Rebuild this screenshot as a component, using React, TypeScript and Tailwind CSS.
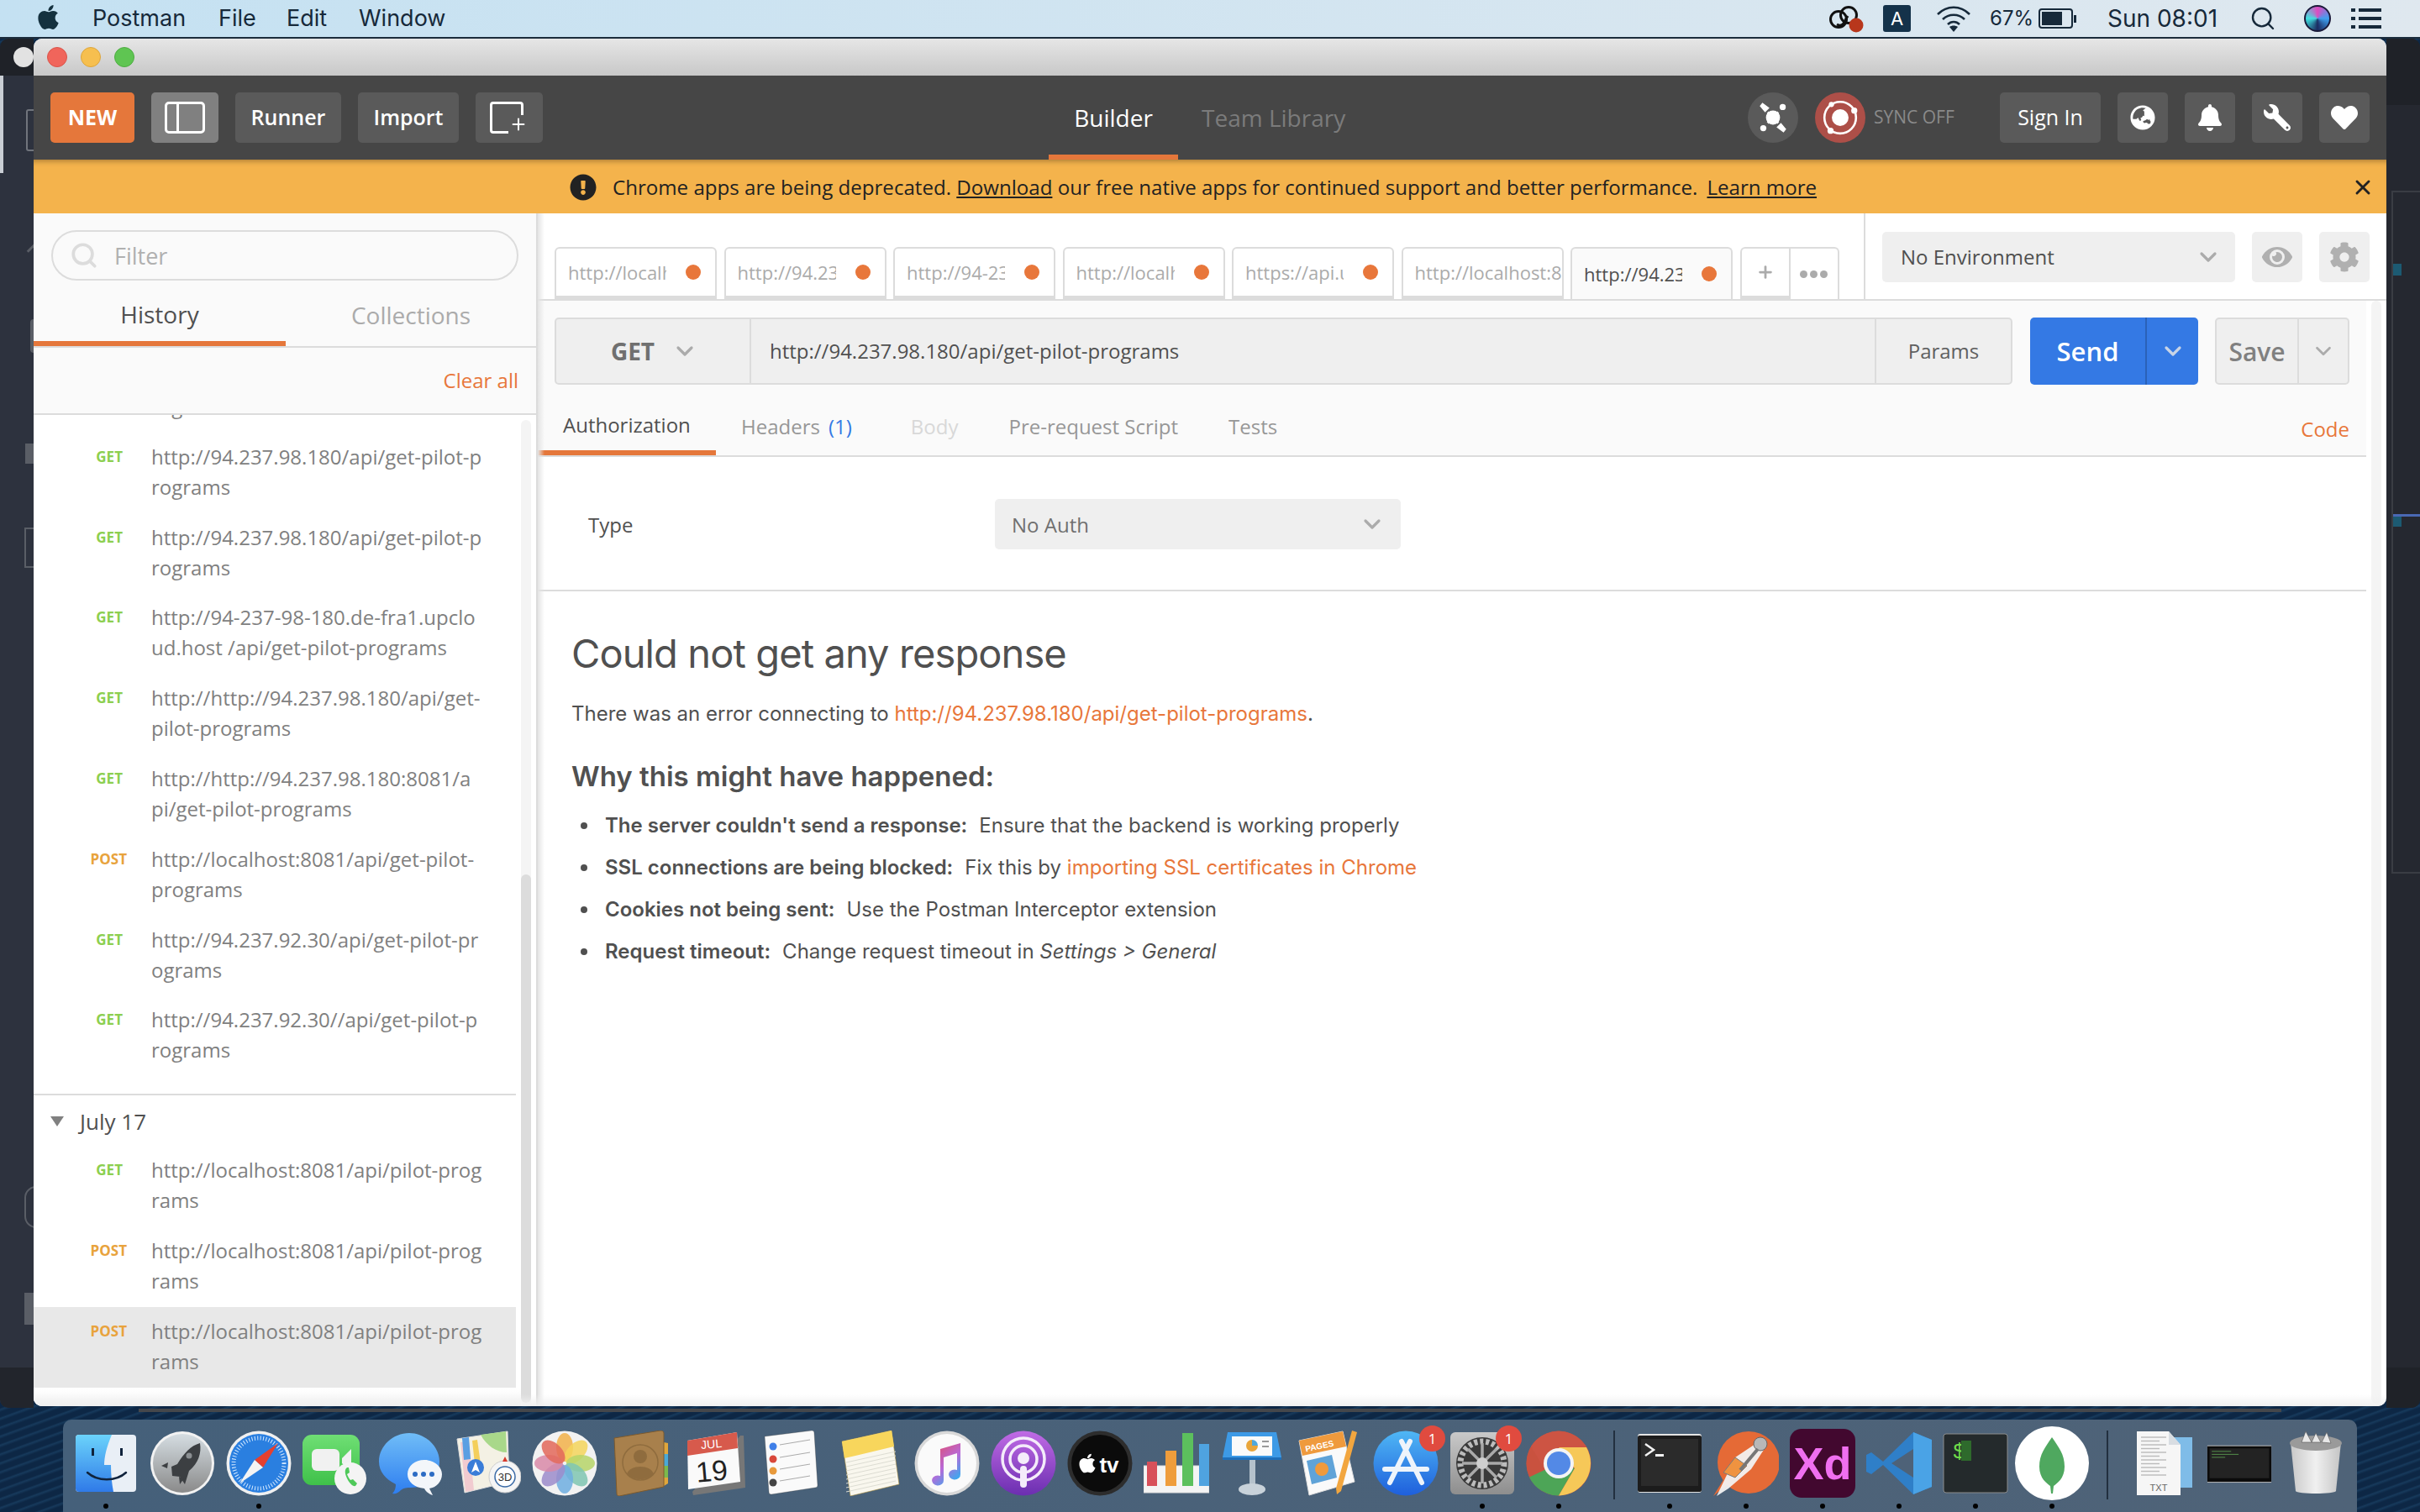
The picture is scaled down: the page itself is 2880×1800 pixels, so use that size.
import React from "react";
import { ChevronDown, Search, X, Plus } from "lucide-react";
import { FaApple, FaBell, FaExclamationCircle, FaGlobeAsia, FaHeart, FaWrench, FaCog, FaEye } from "react-icons/fa";

const openSans = "font-['Open_Sans',sans-serif]";

const historyTop = [
  { m: "GET", a: "http://94.237.98.180/api/get-pilot-p", b: "rograms" },
  { m: "GET", a: "http://94.237.98.180/api/get-pilot-p", b: "rograms" },
  { m: "GET", a: "http://94-237-98-180.de-fra1.upclo", b: "ud.host /api/get-pilot-programs" },
  { m: "GET", a: "http://http://94.237.98.180/api/get-", b: "pilot-programs" },
  { m: "GET", a: "http://http://94.237.98.180:8081/a", b: "pi/get-pilot-programs" },
  { m: "POST", a: "http://localhost:8081/api/get-pilot-", b: "programs" },
  { m: "GET", a: "http://94.237.92.30/api/get-pilot-pr", b: "ograms" },
  { m: "GET", a: "http://94.237.92.30//api/get-pilot-p", b: "rograms" },
];

const historyJuly = [
  { m: "GET", a: "http://localhost:8081/api/pilot-prog", b: "rams" },
  { m: "POST", a: "http://localhost:8081/api/pilot-prog", b: "rams" },
  { m: "POST", a: "http://localhost:8081/api/pilot-prog", b: "rams", selected: true },
];

const tabs = ["http://localhost", "http://94.237", "http://94-237", "http://localhost", "https://api.upcloud", "http://localhost:8081", "http://94.237"];

function HistoryRow({ m, a, b, selected }: { m: string; a: string; b: string; selected?: boolean }) {
  return (
    <div className={`flex h-[95.8px] w-[574px] pt-[11px] ${selected ? "bg-[#e8e8e8]" : ""}`}>
      <div className={`w-[140px] text-right h-[36px] leading-[36px] text-[17px] font-bold ${m === "GET" ? "text-[#8ccf4f] pr-[34px]" : "text-[#e8a33d] pr-[29px]"}`}>{m}</div>
      <div className="text-[24px] leading-[36px] text-[#808080] whitespace-nowrap">
        <div>{a}</div>
        <div>{b}</div>
      </div>
    </div>
  );
}

function ToolBtn({ w, active, children }: { w: string; active?: boolean; children: React.ReactNode }) {
  return (
    <div className={`${w} h-[60px] rounded-[5px] flex items-center justify-center text-white text-[25px] font-semibold ${active ? "bg-[#808080]" : "bg-[#5a5a5a]"}`}>
      {children}
    </div>
  );
}

function Tab({ label, active, wide }: { label: string; active?: boolean; wide?: boolean }) {
  return (
    <div className={`w-[193px] h-[62px] shrink-0 rounded-t-[6px] border-2 border-[#dcdcdc] flex items-center pl-[14px] ${active ? "bg-[#fafafa] border-b-0" : "bg-white border-b-4"}`}>
      <div className={`overflow-hidden whitespace-nowrap text-[22px] ${wide ? "w-[175px]" : "w-[117px]"} ${active ? "text-[#505050]" : "text-[#ababab]"}`}>{label}</div>
      {!wide && <div className="ml-[23px] w-[18px] h-[18px] rounded-full bg-[#e8773b]" />}
    </div>
  );
}

const Finder = () => (
  <svg viewBox="0 0 78 78" className="w-full h-full">
    <defs>
      <linearGradient id="fi" x1="0" y1="0" x2="0" y2="1"><stop offset="0" stopColor="#6bd3fb" /><stop offset="1" stopColor="#2f7ae8" /></linearGradient>
    </defs>
    <rect x="3" y="5" width="72" height="68" rx="4" fill="#e9eff6" />
    <path d="M7 5h39c-6 14-9 26-9 36h8c0 11 1 22 3 32H7a4 4 0 0 1-4-4V9a4 4 0 0 1 4-4z" fill="url(#fi)" />
    <rect x="22" y="21" width="3" height="9" fill="#10233c" /><rect x="56" y="21" width="3" height="9" fill="#10233c" />
    <path d="M17 50c12 11 34 11 46 0" fill="none" stroke="#10233c" strokeWidth="2.5" strokeLinecap="round" />
  </svg>
);
const Launchpad = () => (
  <svg viewBox="0 0 78 78" className="w-full h-full">
    <defs><linearGradient id="lp" x1="0" y1="0" x2="0" y2="1"><stop offset="0" stopColor="#d5dde2" /><stop offset="1" stopColor="#8a8a8a" /></linearGradient></defs>
    <circle cx="39" cy="39" r="38" fill="#f2f2f2" /><circle cx="39" cy="39" r="35" fill="url(#lp)" />
    <path d="M60 15c2 12-2 24-13 33l-5 16-6-9-9-1-1-11 7-3c8-13 16-22 27-25z" fill="#3c3f42" />
    <path d="M22 38l-8 4 7 3zM36 64l-1-9 6 2z" fill="#3c3f42" /><circle cx="47" cy="30" r="3.5" fill="#8b8f92" />
  </svg>
);
const Safari = () => (
  <svg viewBox="0 0 78 78" className="w-full h-full">
    <circle cx="39" cy="39" r="38.5" fill="#f0f0f0" /><circle cx="39" cy="39" r="35" fill="#2a7fe0" />
    <circle cx="39" cy="39" r="30" fill="none" stroke="#d6eaff" strokeWidth="5" strokeDasharray="1 2.4" />
    <path d="M62 15L34 35l10 9z" fill="#e5402f" /><path d="M16 63l28-19-10-9z" fill="#f4f4f4" />
  </svg>
);
const FaceTime = () => (
  <svg viewBox="0 0 78 78" className="w-full h-full">
    <defs><linearGradient id="ft" x1="0" y1="0" x2="0" y2="1"><stop offset="0" stopColor="#6fdf74" /><stop offset="1" stopColor="#3fc14a" /></linearGradient></defs>
    <rect x="0" y="5" width="68" height="60" rx="11" fill="url(#ft)" />
    <rect x="11" y="22" width="33" height="26" rx="6" fill="#f1f1f1" /><path d="M47 33l11-11v27L47 39z" fill="#f1f1f1" />
    <circle cx="57" cy="57" r="19" fill="#f4f4f4" />
    <path d="M53 44c-3 2-3 7 0 13s7 10 10 9l2-3-5-5-3 1c-2-2-3-5-4-7l3-2-1-6z" fill="#4fc95a" />
  </svg>
);
const Messages = () => (
  <svg viewBox="0 0 78 78" className="w-full h-full">
    <defs><linearGradient id="ms" x1="0" y1="0" x2="0" y2="1"><stop offset="0" stopColor="#70bdf7" /><stop offset="1" stopColor="#2e7ef0" /></linearGradient></defs>
    <path d="M36 3c19 0 36 16 36 34 0 19-15 31-34 31-5 0-8 0-12 3-3 3-6 5-10 4 3-3 4-7 4-11C8 58 0 49 0 37 0 18 17 3 36 3z" fill="url(#ms)" />
    <path d="M54 35c12 0 21 8 21 17s-7 16-15 17l4 8c-4-1-8-4-10-8-12-1-20-8-20-17 0-10 9-17 20-17z" fill="#f3f6fa" />
    <circle cx="43" cy="52" r="3" fill="#2d6cc4" /><circle cx="53" cy="52" r="3" fill="#2d6cc4" /><circle cx="63" cy="52" r="3" fill="#2d6cc4" />
  </svg>
);
const Maps = () => (
  <svg viewBox="0 0 78 78" className="w-full h-full">
    <path d="M2 10L62 1l2 60-53 13z" fill="#f4f1e4" stroke="#ddd" />
    <path d="M30 5l30-4 1 25c-12 0-24-8-31-21z" fill="#a9d88a" />
    <path d="M6 14l10-1 6 58-10 2z" fill="#f1cbd0" /><path d="M20 12l6-1 5 36-7 2z" fill="#f4cf5b" />
    <path d="M8 9l8-1 2 26-8 1z" fill="#5b9fe2" />
    <circle cx="24" cy="44" r="10" fill="#3a7dd8" /><path d="M24 37l5 13-5-3-5 3z" fill="#fff" />
    <circle cx="59" cy="55" r="19" fill="#f5f5f5" stroke="#ccc" /><circle cx="59" cy="55" r="12" fill="#fff" stroke="#3a6aa6" strokeWidth="1.5" />
    <path d="M59 31l3 6h-6z" fill="#d73a2c" />
    <text x="59" y="60" textAnchor="middle" fontSize="13" fontFamily="Liberation Sans, sans-serif" fill="#333">3D</text>
  </svg>
);
const Photos = () => {
  const cols = ["#f2b14a", "#f5d55c", "#b6d568", "#7fc6b2", "#6faee0", "#9c8ccb", "#d98aa8", "#e3685b"];
  return (
    <svg viewBox="0 0 78 78" className="w-full h-full">
      <circle cx="39" cy="39" r="38.5" fill="#f2f2f2" />
      {cols.map((c, i) => (
        <ellipse key={i} cx="39" cy="20" rx="10" ry="17" fill={c} fillOpacity="0.85" transform={`rotate(${i * 45} 39 39)`} />
      ))}
    </svg>
  );
};
const Contacts = () => (
  <svg viewBox="0 0 78 78" className="w-full h-full">
    <path d="M66 14l5 1v48l-5 3z" fill="#e0a63c" /><rect x="66" y="28" width="5" height="14" fill="#4aa9d8" /><rect x="66" y="42" width="5" height="14" fill="#7cb94d" />
    <path d="M7 9L62 0c2 0 4 1 4 3v64L13 78c-2 0-3-1-3-3z" fill="#a8804c" stroke="#7c5a2e" />
    <circle cx="38" cy="38" r="21" fill="none" stroke="#8f6c3e" strokeWidth="1.5" />
    <circle cx="38" cy="31" r="8" fill="#8f6c3e" /><path d="M22 52c3-12 29-12 32 0-8 8-24 8-32 0z" fill="#8f6c3e" />
  </svg>
);
const Calendar = () => (
  <svg viewBox="0 0 78 78" className="w-full h-full">
    <path d="M66 6l4 0 2 62-62 9-1-4z" fill="#777" />
    <path d="M3 12L62 2l4 59-62 9z" fill="#fafafa" />
    <path d="M3 12L62 2l1 19-60 9z" fill="#d75a4c" />
    <text x="32" y="21" textAnchor="middle" fontSize="14" fill="#fff" fontFamily="Liberation Sans, sans-serif" transform="rotate(-5 32 21)">JUL</text>
    <text x="33" y="60" textAnchor="middle" fontSize="34" fill="#222" fontFamily="Liberation Sans, sans-serif" transform="rotate(-5 33 60)">19</text>
  </svg>
);
const Reminders = () => (
  <svg viewBox="0 0 78 78" className="w-full h-full">
    <path d="M4 7L60 0c2 0 3 1 3 3l4 62c0 2-1 3-3 3L12 76c-2 0-3-1-3-3z" fill="#fafafa" stroke="#333" strokeOpacity=".3" />
    {[["#3f7fe8", 19], ["#d9483b", 34], ["#e89a3c", 48], ["#444", 62]].map(([c, y], i) => (
      <g key={i}>
        <circle cx="14" cy={y as number} r="4.5" fill={c as string} />
        <path d={`M22 ${(y as number) - 2}L58 ${(y as number) - 8}`} stroke="#aaa" />
      </g>
    ))}
  </svg>
);
const Notes = () => (
  <svg viewBox="0 0 78 78" className="w-full h-full">
    <path d="M5 13L64 0l9 64-58 14z" fill="#f9f7ee" stroke="#a68a3a" strokeOpacity=".6" />
    <path d="M5 13L64 0l3 19-59 14z" fill="#f8d65c" />
    {[0, 1, 2, 3, 4, 5, 6, 7].map((i) => (
      <path key={i} d={`M10 ${38 + i * 5}L69 ${25 + i * 5}`} stroke="#dcdcd2" />
    ))}
  </svg>
);
const Music = () => (
  <svg viewBox="0 0 78 78" className="w-full h-full">
    <defs><linearGradient id="mu" x1="0" y1="0" x2="0.6" y2="1"><stop offset="0" stopColor="#e6495f" /><stop offset="0.6" stopColor="#b86ad8" /><stop offset="1" stopColor="#3fa7ee" /></linearGradient></defs>
    <circle cx="39" cy="39" r="38.5" fill="#d8d8d8" /><circle cx="39" cy="39" r="35" fill="#fafafa" />
    <path d="M31 22l24-7v37a7 6 0 1 1-4-5V27l-16 5v27a7 6 0 1 1-4-5z" fill="url(#mu)" />
  </svg>
);
const Podcasts = () => (
  <svg viewBox="0 0 78 78" className="w-full h-full">
    <defs><linearGradient id="po" x1="0" y1="0" x2="0" y2="1"><stop offset="0" stopColor="#c06be5" /><stop offset="1" stopColor="#6b2eb0" /></linearGradient></defs>
    <circle cx="39" cy="39" r="38.5" fill="url(#po)" />
    <circle cx="39" cy="34" r="25" fill="none" stroke="#f4ecfa" strokeWidth="3.5" /><circle cx="39" cy="34" r="16" fill="none" stroke="#f4ecfa" strokeWidth="3.5" />
    <circle cx="39" cy="33" r="7" fill="#f4ecfa" /><rect x="35" y="42" width="8" height="26" rx="4" fill="#f4ecfa" />
  </svg>
);
const AppleTv = () => (
  <svg viewBox="0 0 78 78" className="w-full h-full">
    <circle cx="39" cy="39" r="38.5" fill="#2d2d2d" /><circle cx="39" cy="39" r="34" fill="#0b0b0b" />
    <foreignObject x="11" y="26" width="26" height="26"><FaApple color="#fff" size={26} /></foreignObject>
    <text x="50" y="50" textAnchor="middle" fontSize="26" fontWeight="700" fill="#fff" fontFamily="Liberation Sans, sans-serif">tv</text>
  </svg>
);
const Numbers = () => (
  <svg viewBox="0 0 78 78" className="w-full h-full">
    <rect x="0" y="42" width="78" height="32" fill="#f4f4f4" stroke="#ddd" />
    <rect x="4" y="37" width="12" height="29" fill="#d8505a" /><rect x="26" y="24" width="13" height="42" fill="#ef9d3c" />
    <rect x="46" y="3" width="13" height="63" fill="#5cc05d" /><rect x="66" y="16" width="12" height="50" fill="#4fa3e0" />
  </svg>
);
const Keynote = () => (
  <svg viewBox="0 0 78 78" className="w-full h-full">
    <rect x="35" y="30" width="7" height="40" fill="#b5c2cc" /><ellipse cx="38" cy="70" rx="16" ry="7" fill="#c8d2da" />
    <path d="M9 2h58l6 30H3z" fill="#3d9ae6" /><path d="M3 32h70v3H3z" fill="#1f6fba" />
    <rect x="14" y="7" width="48" height="23" fill="#fafafa" />
    <path d="M38 11a7 7 0 1 0 7 7h-7z" fill="#e9a53a" /><path d="M38 11a7 7 0 0 1 7 7h-7z" fill="#4fa8dc" />
    <rect x="50" y="12" width="8" height="2" fill="#999" /><rect x="50" y="18" width="8" height="2" fill="#999" />
  </svg>
);
const Pages = () => (
  <svg viewBox="0 0 78 78" className="w-full h-full">
    <path d="M3 12L55 1l14 60-54 16z" fill="#fafafa" stroke="#ddd" />
    <path d="M3 12L55 1l4 18-52 11z" fill="#ef9a3d" />
    <text x="28" y="22" textAnchor="middle" fontSize="10" fontWeight="700" fill="#fff" fontFamily="Liberation Sans, sans-serif" transform="rotate(-12 28 22)">PAGES</text>
    <path d="M12 36l30-7 6 27-30 8z" fill="#5fa3d8" /><circle cx="30" cy="46" r="8" fill="#ef9a3d" />
    <path d="M66 0l6 2-19 70-5 4-1-7z" fill="#f2a63f" />
  </svg>
);
const AppStore = () => (
  <svg viewBox="0 0 78 78" className="w-full h-full">
    <defs><linearGradient id="as" x1="0" y1="0" x2="0" y2="1"><stop offset="0" stopColor="#4fb7f5" /><stop offset="1" stopColor="#1e5fdc" /></linearGradient></defs>
    <circle cx="39" cy="39" r="38.5" fill="url(#as)" />
    <path d="M34 13l24 49M44 13L20 62" stroke="#eef4fb" strokeWidth="6" strokeLinecap="round" /><path d="M14 46h50" stroke="#eef4fb" strokeWidth="6" strokeLinecap="round" />
  </svg>
);
const Settings = () => (
  <svg viewBox="0 0 78 78" className="w-full h-full">
    <defs><linearGradient id="se" x1="0" y1="0" x2="0" y2="1"><stop offset="0" stopColor="#c9c9c9" /><stop offset="1" stopColor="#8e8e8e" /></linearGradient></defs>
    <rect x="1" y="2" width="76" height="74" rx="6" fill="url(#se)" />
    <circle cx="39" cy="39" r="31" fill="#3a3a3a" />
    <circle cx="39" cy="39" r="26" fill="none" stroke="#bcbcbc" strokeWidth="7" strokeDasharray="4 3" />
    <path d="M39 15v48M15 39h48M22 22l34 34M56 22L22 56" stroke="#a9a9a9" strokeWidth="3.5" /><circle cx="39" cy="39" r="7" fill="#cfcfcf" />
  </svg>
);
const Chrome = () => (
  <svg viewBox="0 0 78 78" className="w-full h-full">
    <circle cx="39" cy="39" r="38.5" fill="#c9523f" />
    <path d="M39 39L5.7 58.2A38.5 38.5 0 0 1 5.7 19.8z" fill="#c9523f" />
    <path d="M4 55.5A38.5 38.5 0 0 0 39 77.5L58 45 39 39z" fill="#4da557" />
    <path d="M39 77.5A38.5 38.5 0 0 0 72 20H39l19 25z" fill="#f6c858" />
    <path d="M72 20A38.5 38.5 0 0 0 6 19l16 27 17-26z" fill="#cd5443" />
    <circle cx="39" cy="39" r="18" fill="#f4f4f4" /><circle cx="39" cy="39" r="14" fill="#5389e6" />
  </svg>
);
const Terminal = () => (
  <svg viewBox="0 0 78 78" className="w-full h-full">
    <rect x="1" y="4" width="76" height="70" rx="3" fill="#e4e4e4" /><rect x="1" y="6" width="76" height="67" rx="2" fill="#1c1c1c" /><rect x="5" y="10" width="68" height="56" fill="#2b2b2b" />
    <path d="M10 16l10 7-10 7" fill="none" stroke="#f2f2f2" strokeWidth="2.5" /><rect x="22" y="28" width="10" height="3" fill="#f2f2f2" />
  </svg>
);
const PostmanIcon = () => (
  <svg viewBox="0 0 78 78" className="w-full h-full">
    <circle cx="42" cy="38" r="37" fill="#e56a36" />
    <path d="M0 78l13-21 8 4z" fill="#e56a36" />
    <path d="M4 78l22-46 24-16 10 7-15 23-27 23z" fill="#f2f2f2" opacity=".95" />
    <path d="M12 50l14-18 14 10-14 14z" fill="#ef9340" stroke="#7a7a7a" />
    <circle cx="56" cy="16" r="8" fill="#b8b8b8" stroke="#666" />
    <path d="M53 22L32 47" stroke="#777" strokeWidth="4" />
  </svg>
);
const Xd = () => (
  <div className="w-full h-[82px] -mt-[2px] rounded-[14px] bg-[#42082f] flex items-center justify-center text-[#f06ff0] text-[54px] leading-none font-semibold font-['Liberation_Sans',sans-serif]">Xd</div>
);
const VsCode = () => (
  <svg viewBox="0 0 78 78" className="w-full h-full">
    <path d="M56 2L20 37 6 26 0 29v20l6 3 14-11 36 35 22-9V11z" fill="#2f7fc8" />
    <path d="M56 2l22 9v56l-22 9z" fill="#4aa3e6" /><path d="M56 22L30 39l26 17z" fill="#4e6278" />
  </svg>
);
const ITerm = () => (
  <svg viewBox="0 0 78 78" className="w-full h-full">
    <rect x="1" y="4" width="76" height="70" rx="3" fill="#242a2c" stroke="#8c8c8c" />
    <text x="12" y="33" fontSize="26" fill="#6fdc4a" fontFamily="Liberation Mono, monospace">$</text><rect x="22" y="12" width="12" height="24" fill="#2e6a2c" />
  </svg>
);
const Mongo = () => (
  <svg viewBox="0 0 78 78" className="w-full h-full overflow-visible">
    <circle cx="39" cy="39" r="44" fill="#fff" />
    <path d="M39 8c8 12 15 20 15 35 0 14-9 20-13 23l-1 9h-2l-1-9c-4-3-13-9-13-23 0-15 7-23 15-35z" fill="#4fa85f" />
  </svg>
);
const TxtFile = () => (
  <svg viewBox="0 0 78 78" className="w-full h-full">
    <rect x="44" y="8" width="30" height="60" fill="#7fbce8" />
    <path d="M8 1h38l14 16v60H8z" fill="#f6f6f6" />
    <path d="M46 1l14 16H46z" fill="#d8dde2" />
    {[0, 1, 2, 3, 4, 5, 6, 7, 8, 9, 10].map((i) => (
      <path key={i} d={`M13 ${8 + i * 4.5}h${i % 2 ? 22 : 30}`} stroke="#bbb" strokeWidth="1.4" />
    ))}
    <text x="34" y="72" textAnchor="middle" fontSize="11" fill="#666" fontFamily="Liberation Sans, sans-serif">TXT</text>
  </svg>
);
const MiniTerminal = () => (
  <svg viewBox="0 0 88 78" className="w-full h-full">
    <rect x="1" y="15" width="86" height="50" fill="#cfcfcf" /><rect x="1" y="16" width="86" height="48" fill="#0b0b0b" /><rect x="4" y="19" width="80" height="40" fill="#232323" />
    <path d="M7 23h26M7 27h36M7 31h18" stroke="#5c9c50" />
  </svg>
);
const Trash = () => (
  <svg viewBox="0 0 78 78" className="w-full h-full">
    <defs><linearGradient id="tr" x1="0" y1="0" x2="1" y2="0"><stop offset="0" stopColor="#c8c8c8" /><stop offset="0.5" stopColor="#f0f0f0" /><stop offset="1" stopColor="#c4c4c4" /></linearGradient></defs>
    <path d="M9 14h60l-6 58c-1 4-47 4-48 0z" fill="url(#tr)" /><ellipse cx="39" cy="15" rx="31" ry="9" fill="#9a9a9a" />
    <path d="M22 14l5-13 7 13zM34 14l5-11 6 11zM46 14l6-12 5 13z" fill="#e8e8e8" stroke="#555" strokeWidth=".6" />
  </svg>
);

const dockLeft: { C: React.FC; dot?: boolean; badge?: boolean }[] = [
  { C: Finder, dot: true }, { C: Launchpad }, { C: Safari, dot: true }, { C: FaceTime }, { C: Messages }, { C: Maps }, { C: Photos },
  { C: Contacts }, { C: Calendar }, { C: Reminders }, { C: Notes }, { C: Music }, { C: Podcasts }, { C: AppleTv }, { C: Numbers },
  { C: Keynote }, { C: Pages }, { C: AppStore, badge: true }, { C: Settings, badge: true, dot: true }, { C: Chrome, dot: true },
];
const dockMid: { C: React.FC; dot?: boolean }[] = [
  { C: Terminal, dot: true }, { C: PostmanIcon, dot: true }, { C: Xd, dot: true }, { C: VsCode, dot: true }, { C: ITerm, dot: true }, { C: Mongo, dot: true },
];
const dockRight: { C: React.FC }[] = [{ C: TxtFile }, { C: MiniTerminal }, { C: Trash }];

function DockItem({ C, dot, badge }: { C: React.FC; dot?: boolean; badge?: boolean }) {
  return (
    <div className="relative w-[78px] shrink-0 flex flex-col items-center">
      <div className="w-[78px] h-[78px]"><C /></div>
      {badge && (
        <div className="absolute -top-[6px] -right-[8px] w-[31px] h-[31px] rounded-full bg-[#e04b3f] text-white text-[17px] flex items-center justify-center">1</div>
      )}
      {dot && <div className="absolute top-[87px] w-[6px] h-[6px] rounded-full bg-black" />}
    </div>
  );
}

function MenuIcons() {
  return (
    <div className="ml-auto flex items-center text-[#16293a] h-full">
      <svg viewBox="0 0 42 34" className="w-[42px] h-[34px]">
        <circle cx="24" cy="13" r="9.5" fill="none" stroke="#111" strokeWidth="3" />
        <circle cx="12" cy="18" r="9.5" fill="none" stroke="#111" strokeWidth="3" />
        <path d="M10 24c5 3 8 0 10-5l3-5" fill="none" stroke="#111" strokeWidth="3" />
        <circle cx="33" cy="25" r="8.5" fill="#b8371c" />
      </svg>
      <div className="ml-[23px] w-[33px] h-[32px] rounded-[3px] bg-[#14324a] text-white text-[22px] flex items-center justify-center">A</div>
      <svg viewBox="0 0 42 32" className="ml-[30px] w-[42px] h-[32px]" fill="none" stroke="#16293a" strokeWidth="2.6">
        <path d="M2 11c11-11 27-11 38 0" /><path d="M8 17c7-7 19-7 26 0" /><path d="M14 23c4-4 10-4 14 0" />
        <path d="M21 32l-5-6c3-2 7-2 10 0z" fill="#16293a" stroke="none" />
      </svg>
      <div className="ml-[22px] text-[24px] w-[48px] whitespace-nowrap">67%</div>
      <div className="ml-[10px] w-[41px] h-[24px] rounded-[4px] border-2 border-[#16293a] p-[2px] flex">
        <div className="w-[24px] bg-[#16293a]" />
      </div>
      <div className="w-[3px] h-[9px] bg-[#16293a] ml-[1px]" />
      <div className="ml-[37px] text-[28px] w-[129px] whitespace-nowrap">Sun 08:01</div>
      <Search className="ml-[40px]" size={32} strokeWidth={1.8} color="#16293a" />
      <div className="ml-[33px] w-[32px] h-[32px] rounded-full border-2 border-[#1a1a3a] bg-[conic-gradient(#e04ac0,#3fa0f0,#1a2a60,#40e0e0,#e04ac0)]" />
      <div className="ml-[24px] w-[36px] flex flex-col gap-[6px]">
        {[0, 1, 2].map((i) => (
          <div key={i} className="flex gap-[4px]">
            <div className="w-[5px] h-[4px] bg-[#16293a]" />
            <div className="flex-1 h-[4px] bg-[#16293a]" />
          </div>
        ))}
      </div>
    </div>
  );
}

export default function App() {
  return (
    <div className={`w-[2880px] h-[1800px] overflow-hidden flex flex-col bg-[repeating-linear-gradient(160deg,#0d2745_0px,#0d2745_5px,#173a5c_7px,#0d2745_10px)] ${openSans}`}>
      <div className="h-[46px] shrink-0 border-b-2 border-[#1b2c3c] bg-gradient-to-r from-[#c4e1f2] to-[#dfe8ef] flex items-center pl-[41px] pr-[46px] font-['Inter',sans-serif] text-[#16293a] text-[27px]">
        <FaApple size={33} color="#14313f" className="-mt-[4px]" />
        <div className="ml-[36px] w-[150px]">Postman</div>
        <div className="w-[81px]">File</div>
        <div className="w-[86px]">Edit</div>
        <div>Window</div>
        <MenuIcons />
      </div>

      <div className="h-[1630px] shrink-0 flex relative">
        {/* back window */}
        <div className="w-[40px] shrink-0 bg-[#2d323e] rounded-l-[10px] flex flex-col overflow-hidden">
          <div className="h-[44px] bg-[#1f2228] relative">
            <div className="absolute left-[16px] top-[10px] w-[24px] h-[24px] rounded-full bg-[#e2e2e2]" />
          </div>
          <div className="w-[4px] h-[116px] bg-[#c9ced4]" />
          <div className="flex-1 relative">
            <div className="absolute left-[31px] top-[-76px] w-[16px] h-[50px] border-2 border-[#70747c] rounded-[3px]" />
            <div className="absolute left-[31px] top-[88px] w-[12px] h-[3px] bg-[#5a5e66] -rotate-45" />
            <div className="absolute left-[36px] top-[174px] w-[8px] h-[40px] rounded-full bg-[#5a5e66]" />
            <div className="absolute left-[30px] top-[322px] w-[12px] h-[24px] bg-[#5a5e66]" />
            <div className="absolute left-[29px] top-[422px] w-[16px] h-[48px] border-2 border-[#5a5e66]" />
            <div className="absolute left-[29px] top-[1206px] w-[28px] h-[50px] border-2 border-[#5a5e66] rounded-full" />
            <div className="absolute left-[29px] top-[1333px] w-[12px] h-[38px] bg-[#5a5e66]" />
          </div>
          <div className="h-[48px] bg-[#22252c]" />
        </div>

        {/* postman window */}
        <div className="w-[2800px] h-[1628px] shrink-0 flex flex-col rounded-[10px] overflow-hidden relative bg-white">
          <div className="h-[44px] shrink-0 bg-gradient-to-b from-[#e6e6e6] to-[#c8c8c8] flex items-center pl-[16px] gap-[16px]">
            <div className="w-[24px] h-[24px] rounded-full bg-[#f0655b] border border-[#d9544a]" />
            <div className="w-[24px] h-[24px] rounded-full bg-[#f6bf4f] border border-[#dca53c]" />
            <div className="w-[24px] h-[24px] rounded-full bg-[#5fc552] border border-[#4dac42]" />
          </div>

          <div className="h-[100px] shrink-0 bg-[#464646] flex items-center pl-[20px] pr-[20px]">
            <div className="w-[100px] h-[60px] rounded-[5px] bg-[#e5773b] flex items-center justify-center text-white text-[25px] font-bold">NEW</div>
            <div className="ml-[20px]">
              <ToolBtn w="w-[80px]" active>
                <div className="w-[48px] h-[38px] rounded-[5px] border-[3px] border-white flex">
                  <div className="w-[14px] border-r-[3px] border-white" />
                </div>
              </ToolBtn>
            </div>
            <div className="ml-[20px]"><ToolBtn w="w-[126px]">Runner</ToolBtn></div>
            <div className="ml-[20px]"><ToolBtn w="w-[120px]">Import</ToolBtn></div>
            <div className="ml-[20px]">
              <ToolBtn w="w-[80px]">
                <div className="relative w-[46px] h-[38px]">
                  <div className="w-[40px] h-[38px] rounded-[4px] border-[3px] border-white" />
                  <div className="absolute right-0 bottom-0 w-[24px] h-[22px] bg-[#5a5a5a] flex items-center justify-center">
                    <Plus size={22} color="#fff" strokeWidth={2.2} />
                  </div>
                </div>
              </ToolBtn>
            </div>
            <div className="ml-[602px] w-[154px] h-[100px] border-b-[6px] border-[#e5773b] flex items-center justify-center text-white text-[28px] pt-[6px]">Builder</div>
            <div className="ml-[28px] text-[#7b7b7b] text-[28px] whitespace-nowrap">Team Library</div>
            <div className="ml-auto flex items-center">
              <div className="w-[60px] h-[60px] rounded-full bg-[#5a5a5a] flex items-center justify-center">
                <svg viewBox="0 0 40 40" className="w-[42px] h-[42px]" fill="#fff">
                  <circle cx="20" cy="20" r="8" /><path d="M8 3l8 6-5 5-6-7zM32 37l-8-6 5-5 6 7z" /><circle cx="31" cy="8" r="3.5" /><circle cx="9" cy="32" r="3.5" />
                  <path d="M14 14l12 12M26 14L14 26" stroke="#fff" strokeWidth="3" />
                </svg>
              </div>
              <div className="ml-[20px] w-[60px] h-[60px] rounded-full bg-[#ad4f48] flex items-center justify-center">
                <svg viewBox="0 0 44 44" className="w-[46px] h-[46px]" fill="none" stroke="#fff" strokeWidth="2.5">
                  <circle cx="22" cy="22" r="18" /><circle cx="22" cy="22" r="9.5" fill="#fff" stroke="none" />
                  <circle cx="38" cy="14" r="3.5" fill="#fff" stroke="none" /><circle cx="12" cy="7" r="3" fill="#fff" stroke="none" /><circle cx="11" cy="37" r="3.5" fill="#fff" stroke="none" />
                </svg>
              </div>
              <div className="ml-[10px] w-[150px] text-[21px] text-[#8a8a8a] whitespace-nowrap">SYNC OFF</div>
              <ToolBtn w="w-[120px]"><span className="font-normal text-[25px]">Sign In</span></ToolBtn>
              <div className="ml-[20px]"><ToolBtn w="w-[60px]"><FaGlobeAsia size={30} /></ToolBtn></div>
              <div className="ml-[20px]"><ToolBtn w="w-[60px]"><FaBell size={32} /></ToolBtn></div>
              <div className="ml-[20px]"><ToolBtn w="w-[60px]"><FaWrench size={32} className="-scale-x-100" /></ToolBtn></div>
              <div className="ml-[20px]"><ToolBtn w="w-[60px]"><FaHeart size={32} /></ToolBtn></div>
            </div>
          </div>

          <div className="h-[64px] shrink-0 bg-[#f4b34c] shadow-[inset_0_6px_6px_-4px_rgba(0,0,0,0.3)] flex items-center pl-[638px] pr-[14px] pt-[2px] text-[#222] text-[24.1px] whitespace-nowrap">
            <FaExclamationCircle size={32} color="#222" />
            <div className="ml-[19px]">
              Chrome apps are being deprecated. <span className="underline">Download</span> our free native apps for continued support and better performance.
              <span className="ml-[11px] underline">Learn more</span>
            </div>
            <X className="ml-auto" size={28} color="#222" strokeWidth={2.5} />
          </div>

          <div className="flex-1 flex min-h-0 relative">
            {/* sidebar */}
            <div className="w-[598px] shrink-0 flex flex-col relative">
              <div className="h-[160px] shrink-0 bg-[#fafafa] border-b-2 border-[#dcdcdc] flex flex-col">
                <div className="mt-[20px] ml-[21px] w-[556px] h-[60px] shrink-0 rounded-full border-2 border-[#dcdcdc] flex items-center pl-[20px]">
                  <Search size={34} color="#dcdcdc" strokeWidth={2.6} />
                  <div className="ml-[19px] pt-[2px] text-[27px] text-[#b0b0b0]">Filter</div>
                </div>
                <div className="flex flex-1">
                  <div className="w-[300px] border-b-[6px] border-[#e5773b] flex items-center justify-center text-[28px] text-[#505050] pt-[8px]">History</div>
                  <div className="flex-1 flex items-center justify-center text-[28px] text-[#ababab] pt-[4px]">Collections</div>
                </div>
              </div>
              <div className="h-[80px] shrink-0 bg-[#fafafa] border-b-2 border-[#dcdcdc] flex items-center justify-end pr-[21px] text-[24px] text-[#e8773b]">Clear all</div>
              <div className="flex-1 min-h-0 overflow-hidden relative bg-white">
                <div className="-mt-[75px]">
                  {[{ m: "GET", a: "http://94.237.98.180/api/get-pilot-p", b: "rograms" }, ...historyTop].map((r, i) => (
                    <HistoryRow key={i} {...r} />
                  ))}
                  <div className="w-[574px] h-[84px] mt-[21px] border-t-2 border-[#dcdcdc] flex items-center pl-[20px] pb-[28px] pt-[8px]">
                    <div className="w-0 h-0 border-l-[8px] border-r-[8px] border-t-[12px] border-l-transparent border-r-transparent border-t-[#808080]" />
                    <div className="ml-[19px] text-[26px] text-[#505050]">July 17</div>
                  </div>
                  <div className="-mt-[22px]">
                    {historyJuly.map((r, i) => (
                      <HistoryRow key={i} {...r} />
                    ))}
                  </div>
                </div>
                <div className="absolute left-[580px] top-[6px] bottom-0 w-[12px] rounded-full bg-[#f4f4f4]">
                  <div className="absolute left-0 right-0 top-[541px] bottom-[4px] rounded-full bg-[#dcdcdc]" />
                </div>
                <div className="absolute left-0 right-[18px] bottom-0 h-[20px] bg-gradient-to-b from-white to-[#f2f2f2]" />
              </div>
            </div>

            {/* builder */}
            <div className="flex-1 min-w-0 flex flex-col relative border-l-2 border-[#dcdcdc]">
              <div className="h-[102px] shrink-0 border-b-2 border-[#dcdcdc] flex pl-[20px] box-content">
                <div className="flex items-end gap-[8.5px] w-[1558px] shrink-0">
                  {tabs.map((t, i) => (
                    <Tab key={i} label={t} active={i === 6} wide={i === 5} />
                  ))}
                  <div className="w-[118px] h-[62px] shrink-0 rounded-t-[6px] border-2 border-b-0 border-[#dcdcdc] flex text-[#ababab]">
                    <div className="w-[58px] border-r-2 border-b-4 border-[#dcdcdc] flex items-center justify-center"><Plus size={22} strokeWidth={3} /></div>
                    <div className="flex-1 flex items-center justify-center gap-[3px]">
                      <div className="w-[9px] h-[9px] rounded-full bg-[#ababab]" /><div className="w-[9px] h-[9px] rounded-full bg-[#ababab]" /><div className="w-[9px] h-[9px] rounded-full bg-[#ababab]" />
                    </div>
                  </div>
                </div>
                <div className="pl-[20px] border-l-2 border-[#dcdcdc] flex pt-[22px] gap-[20px]">
                  <div className="w-[420px] h-[60px] rounded-[5px] bg-[#efefef] flex items-center justify-between pl-[22px] pr-[16px] text-[24px] text-[#505050]">
                    No Environment
                    <ChevronDown size={32} color="#ababab" strokeWidth={2.4} />
                  </div>
                  <div className="w-[60px] h-[60px] rounded-[5px] bg-[#efefef] flex items-center justify-center"><FaEye size={36} color="#b0b0b0" /></div>
                  <div className="w-[60px] h-[60px] rounded-[5px] bg-[#efefef] flex items-center justify-center"><FaCog size={36} color="#b0b0b0" /></div>
                </div>
              </div>

              <div className="w-[2176px] h-[186px] shrink-0 bg-[#fafafa] border-b-2 border-[#dcdcdc] flex flex-col">
                <div className="mt-[20px] ml-[20px] flex h-[80px]">
                  <div className="w-[1735px] flex rounded-[5px] border-2 border-[#dcdcdc] bg-[#efefef]">
                    <div className="w-[232px] border-r-2 border-[#dcdcdc] flex items-center justify-center text-[28px] font-bold text-[#707070] gap-[20px] pl-[4px]">
                      GET
                      <ChevronDown size={32} color="#ababab" strokeWidth={2.4} />
                    </div>
                    <div className="flex-1 pl-[22px] flex items-center text-[24px] text-[#505050]">http://94.237.98.180/api/get-pilot-programs</div>
                    <div className="w-[162px] border-l-2 border-[#dcdcdc] flex items-center justify-center text-[24px] text-[#606060]">Params</div>
                  </div>
                  <div className="ml-[21px] w-[200px] rounded-[5px] bg-[#3479e4] flex text-white">
                    <div className="w-[139px] border-r-2 border-[#2a62b8] flex items-center justify-center text-[31px] font-semibold">Send</div>
                    <div className="flex-1 flex items-center justify-center"><ChevronDown size={32} color="#c8d4e6" strokeWidth={2.4} /></div>
                  </div>
                  <div className="ml-[20px] w-[160px] rounded-[5px] border-2 border-[#dcdcdc] bg-[#efefef] flex">
                    <div className="w-[98px] border-r-2 border-[#dcdcdc] flex items-center justify-center text-[30px] font-semibold text-[#808080]">Save</div>
                    <div className="flex-1 flex items-center justify-center"><ChevronDown size={30} color="#ababab" strokeWidth={2.2} /></div>
                  </div>
                </div>
                <div className="flex-1 flex text-[24px] text-[#979797] relative mt-[8px]">
                  <div className="w-[212px] border-b-[6px] border-[#e5773b] flex items-center pl-[30px] pt-[10px] text-[#505050]">Authorization</div>
                  <div className="ml-[30px] flex items-center pt-[8px] whitespace-nowrap">Headers <span className="ml-[10px] text-[#3479e4]">(1)</span></div>
                  <div className="ml-[70px] flex items-center pt-[8px] text-[#d8d8d8]">Body</div>
                  <div className="ml-[60px] flex items-center pt-[8px]">Pre-request Script</div>
                  <div className="ml-[60px] flex items-center pt-[8px]">Tests</div>
                  <div className="ml-auto mr-[20px] flex items-center pt-[14px] text-[#e8773b]">Code</div>
                </div>
              </div>

              <div className="w-[2176px] h-[160px] shrink-0 border-b-2 border-[#dcdcdc] flex items-start pt-[50px] pl-[60px] text-[24px] text-[#505050]">
                <div className="w-[484px] h-[60px] flex items-center pt-[2px]">Type</div>
                <div className="w-[483px] h-[60px] rounded-[5px] bg-[#efefef] flex items-center justify-between pl-[20px] pr-[18px] text-[#707070]">
                  <span className="pt-[2px]">No Auth</span>
                  <ChevronDown size={32} color="#ababab" strokeWidth={2.4} />
                </div>
              </div>

              <div className="pl-[40px] pt-[38px] font-['Inter',sans-serif] text-[#505050]">
                <h1 className="text-[47px] leading-[72px] tracking-[-0.9px]">Could not get any response</h1>
                <p className="mt-[18px] text-[24px] leading-[36px]">
                  There was an error connecting to <span className="text-[#e8773b]">http://94.237.98.180/api/get-pilot-programs</span>.
                </p>
                <h2 className="mt-[29px] text-[33px] leading-[54px] font-semibold">Why this might have happened:</h2>
                <ul className="mt-[7px] text-[24px]">
                  <li className="h-[50px] flex items-center">
                    <div className="ml-[11px] w-[8px] h-[8px] rounded-full bg-[#505050]" />
                    <b className="ml-[21px] font-semibold">The server couldn't send a response:</b>
                    <span className="ml-[14px]">Ensure that the backend is working properly</span>
                  </li>
                  <li className="h-[50px] flex items-center">
                    <div className="ml-[11px] w-[8px] h-[8px] rounded-full bg-[#505050]" />
                    <b className="ml-[21px] font-semibold">SSL connections are being blocked:</b>
                    <span className="ml-[14px]">Fix this by <span className="text-[#e8773b]">importing SSL certificates in Chrome</span></span>
                  </li>
                  <li className="h-[50px] flex items-center">
                    <div className="ml-[11px] w-[8px] h-[8px] rounded-full bg-[#505050]" />
                    <b className="ml-[21px] font-semibold">Cookies not being sent:</b>
                    <span className="ml-[14px]">Use the Postman Interceptor extension</span>
                  </li>
                  <li className="h-[50px] flex items-center">
                    <div className="ml-[11px] w-[8px] h-[8px] rounded-full bg-[#505050]" />
                    <b className="ml-[21px] font-semibold">Request timeout:</b>
                    <span className="ml-[14px]">Change request timeout in <i>Settings &gt; General</i></span>
                  </li>
                </ul>
              </div>

              <div className="absolute left-0 top-0 bottom-0 w-[8px] bg-gradient-to-r from-[#e4e4e4] to-transparent" />
              <div className="absolute right-[6px] top-[104px] bottom-[3px] w-[12px] rounded-full bg-[#f4f4f4]" />
            </div>
          </div>
          <div className="absolute left-0 right-0 bottom-0 h-[14px] bg-gradient-to-b from-transparent to-[#f0f0f0]" />
        </div>

        <div className="flex-1 bg-[#252830] rounded-r-[10px] flex flex-col overflow-hidden">
          <div className="h-[79px] bg-[#1f2228]" />
          <div className="h-[102px] shrink-0" />
          <div className="ml-[6px] h-[813px] border-l-2 border-t-2 border-b-2 border-[#3a3d44] flex flex-col">
            <div className="h-[85px]" />
            <div className="w-[10px] h-[14px] bg-[#1c5a72]" />
            <div className="h-[284px]" />
            <div className="h-[3px] bg-[#4a69b4]" />
            <div className="w-[10px] h-[12px] bg-[#1c5a72]" />
          </div>
          <div className="flex-1" />
          <div className="h-[48px] bg-[#1f2228]" />
        </div>
      </div>

      <div className="h-[14px] shrink-0 pt-[1px] px-[165px]">
        <div className="h-[4px] bg-[#45474b]" />
      </div>

      <div className="ml-[75px] w-[2730px] h-[110px] shrink-0 rounded-t-[10px] bg-gradient-to-r from-[#45607a] to-[#4f6378] flex pl-[12px] pt-[13px] gap-[13px]">
        {dockLeft.map((d, i) => (
          <DockItem key={i} {...d} />
        ))}
        <div className="w-[2px] h-[82px] mx-[13px] bg-[#22303f]" />
        {dockMid.map((d, i) => (
          <DockItem key={i} {...d} />
        ))}
        <div className="w-[2px] h-[82px] mx-[13px] bg-[#22303f]" />
        {dockRight.map((d, i) => (
          <DockItem key={i} {...d} />
        ))}
      </div>
    </div>
  );
}
